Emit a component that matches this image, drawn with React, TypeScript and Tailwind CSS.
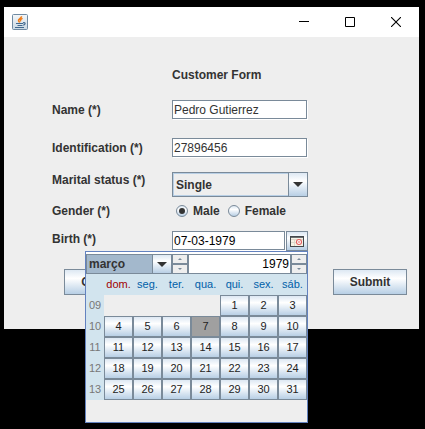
import { useState } from "react";
import type { ReactNode } from "react";

const metal = "bg-linear-to-b from-[#dde8f3] via-white via-35% to-[#b8cfe5]";
const fieldBox =
  "h-[19px] min-w-0 border border-[#7a8a99] bg-white px-px text-xs shadow-[1px_1px_0_white] outline-none";

const WEEKDAYS = ["dom.", "seg.", "ter.", "qua.", "qui.", "sex.", "sáb."];
const WEEKS: { week: string; days: (number | null)[] }[] = [
  { week: "09", days: [null, null, null, null, 1, 2, 3] },
  { week: "10", days: [4, 5, 6, 7, 8, 9, 10] },
  { week: "11", days: [11, 12, 13, 14, 15, 16, 17] },
  { week: "12", days: [18, 19, 20, 21, 22, 23, 24] },
  { week: "13", days: [25, 26, 27, 28, 29, 30, 31] },
];

function JavaIcon() {
  return (
    <svg width="16" height="16" viewBox="0 0 16 16" aria-hidden="true">
      <defs>
        <linearGradient id="java-bg" x1="0" y1="0" x2="0" y2="1">
          <stop offset="0" stopColor="#f4f7f9" />
          <stop offset="1" stopColor="#c9d8e4" />
        </linearGradient>
      </defs>
      <rect x="0.5" y="0.5" width="15" height="15" rx="1" fill="url(#java-bg)" stroke="#6f8aa2" />
      <path d="M9.6 2.2C9.4 4.4 6 4.8 6.5 6.6 6.7 7.4 7.5 7.8 7.8 8.6M10.6 4.4C8.6 5 8 6 8.8 7.4" fill="none" stroke="#f07c18" strokeWidth="1.5" />
      <path d="M4 9.5h7M5.5 11.5h5M3 13.5h9M11 8.8c2.9-.8 2.6 1.9.2 2.4" fill="none" stroke="#41698f" strokeWidth="1.2" />
    </svg>
  );
}

function CalendarIcon() {
  return (
    <svg width="14" height="11" viewBox="0 0 14 11" aria-hidden="true">
      <rect x="0.5" y="0.5" width="13" height="10" fill="#f5f1e6" stroke="#44484c" />
      <path d="M1 1.5h12" stroke="#6c6f70" />
      <path d="M1 3.5h12M4.5 3v7M1 6.5h6" stroke="#ddd9cc" />
      <circle cx="9" cy="6" r="2.5" fill="#fff" stroke="#e46060" strokeWidth="1.1" />
      <circle cx="9" cy="6" r="0.8" fill="#e05050" />
    </svg>
  );
}

function ComboArrow() {
  return (
    <svg width="10" height="5" viewBox="0 0 10 5" aria-hidden="true">
      <path d="M0 0h10L5 5z" fill="#333" />
    </svg>
  );
}

function Spinner({ name }: { name: string }) {
  return (
    <div className="flex w-4 flex-col">
      <button type="button" aria-label={`Next ${name}`} className="flex h-[10px] items-center justify-center border border-[#7a8a99] bg-[#eee]">
        <svg width="4" height="2" viewBox="0 0 4 2" aria-hidden="true"><path d="M0 2h4L2 0z" fill="#7a8a99" /></svg>
      </button>
      <button type="button" aria-label={`Previous ${name}`} className="flex h-[10px] items-center justify-center border border-[#7a8a99] bg-[#eee]">
        <svg width="4" height="2" viewBox="0 0 4 2" aria-hidden="true"><path d="M0 0h4L2 2z" fill="#7a8a99" /></svg>
      </button>
    </div>
  );
}

function DatePopup({ selected, onSelect }: { selected: number; onSelect: (day: number) => void }) {
  return (
    <div className="absolute top-full right-0 z-10 w-[223px] border border-[#6382bf] bg-[#eee] pb-[22px]">
      <div className="flex bg-white pt-[2px]">
        <div className="relative flex w-[86px]">
          <select aria-label="Month" defaultValue="março" className="h-5 w-full appearance-none border border-[#7a8a99] bg-[#a3b8cc] pl-[2px] text-xs font-bold text-[#333] outline-none">
            <option>fevereiro</option>
            <option>março</option>
            <option>abril</option>
          </select>
          <span className={`pointer-events-none absolute inset-y-0 right-0 flex w-5 items-center justify-center border border-[#7a8a99] ${metal}`}>
            <ComboArrow />
          </span>
        </div>
        <Spinner name="month" />
        <input aria-label="Year" defaultValue="1979" className="h-5 w-0 min-w-0 flex-1 border border-[#7a8a99] bg-white pr-px text-right text-xs text-black outline-none" />
        <Spinner name="year" />
      </div>
      <table className="w-full table-fixed border-collapse text-center text-[11px]">
        <thead>
          <tr className="h-[21px] bg-[#d2e4ee]">
            <td className="w-[18px] p-0" />
            {WEEKDAYS.map((day, i) => (
              <th key={day} className={`w-[29px] p-0 font-normal ${i === 0 ? "text-[#a00000]" : "text-[#0060a8]"}`}>
                {day}
              </th>
            ))}
          </tr>
        </thead>
        <tbody>
          {WEEKS.map(({ week, days }) => (
            <tr key={week} className="h-[21px]">
              <th className="bg-[#d2e4ee] p-0 font-normal text-[#777]">{week}</th>
              {days.map((day, i) => (
                <td key={i} className="p-0">
                  {day !== null && (
                    <button
                      type="button"
                      onClick={() => onSelect(day)}
                      className={`block h-[21px] w-full border border-[#7a8a99] text-[#222] ${day === selected ? "bg-[#a0a0a0]" : metal}`}
                    >
                      {day}
                    </button>
                  )}
                </td>
              ))}
            </tr>
          ))}
        </tbody>
      </table>
    </div>
  );
}

function Row({ label, htmlFor, className, children }: { label: string; htmlFor: string; className: string; children: ReactNode }) {
  return (
    <div className={`grid grid-cols-[120px_136px] pl-12 ${className}`}>
      <label htmlFor={htmlFor} className="font-bold">{label}</label>
      {children}
    </div>
  );
}

function GenderOption({ id, label, checked }: { id: string; label: string; checked?: boolean }) {
  return (
    <span className="flex items-center gap-[5px]">
      <input
        id={id}
        type="radio"
        name="gender"
        defaultChecked={checked}
        className={`flex size-3 appearance-none items-center justify-center rounded-full border border-[#7a8a99] checked:before:size-[6px] checked:before:rounded-full checked:before:bg-[#333] ${metal}`}
      />
      <label htmlFor={id} className="font-bold">{label}</label>
    </span>
  );
}

export default function App() {
  const [day, setDay] = useState(7);
  const date = `${String(day).padStart(2, "0")}-03-1979`;

  return (
    <div className="min-h-screen bg-black pt-[7px] pr-[6px] pb-[100px] pl-1 font-['Liberation_Sans',Arial,sans-serif] text-xs text-[#333]">
      <div className="bg-[#eee]">
        <header className="flex h-[30px] items-center justify-between bg-white pr-[18px] pl-2">
          <JavaIcon />
          <div className="flex gap-9 text-black">
            <button type="button" aria-label="Minimize">
              <svg width="10" height="10" viewBox="0 0 10 10"><path d="M0 4.5h10" stroke="currentColor" /></svg>
            </button>
            <button type="button" aria-label="Maximize">
              <svg width="10" height="10" viewBox="0 0 10 10"><path d="M.5.5h9v9h-9z" fill="none" stroke="currentColor" /></svg>
            </button>
            <button type="button" aria-label="Close">
              <svg width="10" height="10" viewBox="0 0 10 10"><path d="M0 0l10 10M10 0L0 10" stroke="currentColor" strokeWidth="1.1" /></svg>
            </button>
          </div>
        </header>

        <form className="pt-[30px] pb-[34px]" onSubmit={(e) => e.preventDefault()}>
          <h1 className="pl-[168px] font-bold">Customer Form</h1>

          <Row label="Name (*)" htmlFor="name" className="mt-[17px] items-center">
            <input id="name" defaultValue="Pedro Gutierrez" className={`mr-px ${fieldBox}`} />
          </Row>
          <Row label="Identification (*)" htmlFor="identification" className="mt-[19px] items-center">
            <input id="identification" defaultValue="27896456" className={`mr-px ${fieldBox}`} />
          </Row>
          <Row label="Marital status (*)" htmlFor="marital" className="mt-[15px] items-start">
            <div className="relative flex">
              <select id="marital" defaultValue="Single" className="h-[25px] w-full appearance-none border border-[#7a8a99] bg-[#eee] pl-[3px] font-bold shadow-[inset_0_0_0_1px_#b8cfe5] outline-none">
                <option>Single</option>
                <option>Married</option>
              </select>
              <span className={`pointer-events-none absolute inset-y-0 right-0 flex w-5 items-center justify-center border border-[#7a8a99] ${metal}`}>
                <ComboArrow />
              </span>
            </div>
          </Row>
          <Row label="Gender (*)" htmlFor="male" className="mt-[6px] items-center">
            <div className="flex gap-2 pl-1">
              <GenderOption id="male" label="Male" checked />
              <GenderOption id="female" label="Female" />
            </div>
          </Row>
          <Row label="Birth (*)" htmlFor="birth" className="mt-3 items-start">
            <div className="relative flex">
              <input id="birth" value={date} readOnly className={`flex-1 text-black ${fieldBox}`} />
              <button type="button" aria-label="Choose date" className={`ml-px flex h-5 w-[22px] items-center justify-center border border-[#7a8a99] ${metal}`}>
                <CalendarIcon />
              </button>
              <DatePopup selected={day} onSelect={setDay} />
            </div>
          </Row>

          <div className="mt-[18px] flex justify-between pr-3 pl-[60px]">
            <button type="button" className={`h-[26px] w-[74px] border border-[#7a8a99] font-bold ${metal}`}>Cancel</button>
            <button type="submit" className={`h-[26px] w-[74px] border border-[#7a8a99] font-bold ${metal}`}>Submit</button>
          </div>
        </form>
      </div>
    </div>
  );
}
